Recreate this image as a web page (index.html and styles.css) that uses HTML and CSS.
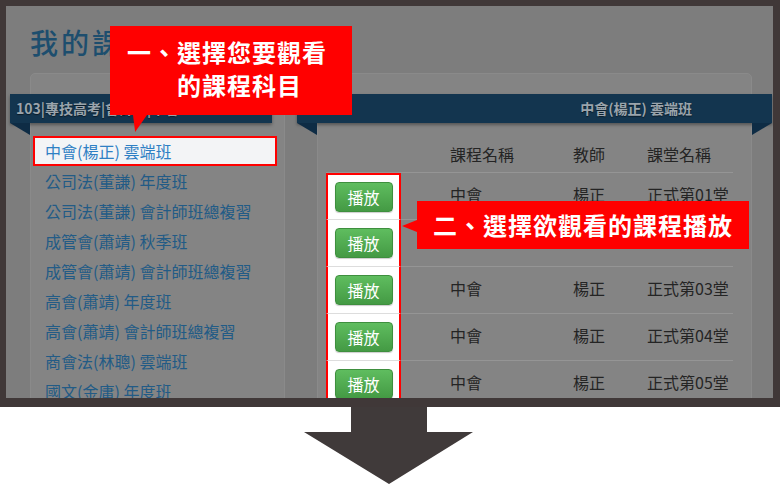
FILE: index.html
```html
<!DOCTYPE html>
<html lang="zh-Hant">
<head>
    <meta charset="UTF-8">
    <meta name="viewport" content="width=device-width, initial-scale=1">
    <title>我的課程</title>
    <link rel="stylesheet" href="styles.css">
</head>
<body>
    <div class="shot">
        <div class="page-head">
            <h1>我的課程</h1>
        </div>
        <div class="panels">
            <section class="card card-left">
                <div class="ribbon ribbon-left">103|專技高考|會計師|中會</div>
                <ul class="course-list">
                    <li class="active">中會(楊正) 雲端班</li>
                    <li>公司法(董謙) 年度班</li>
                    <li>公司法(董謙) 會計師班總複習</li>
                    <li>成管會(蕭靖) 秋季班</li>
                    <li>成管會(蕭靖) 會計師班總複習</li>
                    <li>高會(蕭靖) 年度班</li>
                    <li>高會(蕭靖) 會計師班總複習</li>
                    <li>商會法(林聰) 雲端班</li>
                    <li>國文(金庸) 年度班</li>
                </ul>
            </section>
            <section class="card card-right">
                <div class="ribbon ribbon-right">中會(楊正) 雲端班</div>
                <div class="lessons">
                    <div class="row head">
                        <span class="play"></span>
                        <span>課程名稱</span>
                        <span>教師</span>
                        <span>課堂名稱</span>
                    </div>
                    <div class="row">
                        <span class="play"><button class="btn">播放</button></span>
                        <span>中會</span>
                        <span>楊正</span>
                        <span>正式第01堂</span>
                    </div>
                    <!-- 這一列的文字被說明框蓋住 -->
                    <div class="row">
                        <span class="play"><button class="btn">播放</button></span>
                        <span></span>
                        <span></span>
                        <span></span>
                    </div>
                    <div class="row">
                        <span class="play"><button class="btn">播放</button></span>
                        <span>中會</span>
                        <span>楊正</span>
                        <span>正式第03堂</span>
                    </div>
                    <div class="row">
                        <span class="play"><button class="btn">播放</button></span>
                        <span>中會</span>
                        <span>楊正</span>
                        <span>正式第04堂</span>
                    </div>
                    <div class="row">
                        <span class="play"><button class="btn">播放</button></span>
                        <span>中會</span>
                        <span>楊正</span>
                        <span>正式第05堂</span>
                    </div>
                </div>
            </section>
        </div>
        <!-- 標註 -->
        <div class="callout callout-one">一、選擇您要觀看<br>　　的課程科目</div>
        <div class="callout callout-two">二、選擇欲觀看的課程播放</div>
    </div>
    <svg class="down-arrow" width="780" height="79" viewBox="0 0 780 79">
        <polygon points="351,0 427,0 427,25 473,25 389,77 304,25 351,25" fill="#403a3a"/>
    </svg>
</body>
</html>
```

FILE: styles.css
```css
body {
    margin: 0;
    width: 780px;
    height: 486px;
    overflow: hidden;
    background: #fff;
    font-family: "Noto Sans CJK TC", "Noto Sans", sans-serif;
}
.shot {
    position: relative;
    box-sizing: border-box;
    height: 407px;
    border: 6px solid #403838;
    border-right-width: 7px;
    border-bottom-width: 9px;
    background: #7d7d7d;
    overflow: hidden;
}
.page-head {
    height: 67px;
    box-sizing: border-box;
    padding: 19px 0 0 24px;
}
.page-head h1 {
    margin: 0;
    font-size: 28px;
    line-height: 34px;
    font-weight: 500;
    color: #1d4e6e;
    letter-spacing: 3px;
}
.panels {
    display: flex;
    gap: 32px;
    padding-left: 24px;
}
.card {
    box-sizing: border-box;
    height: 360px;
    padding-top: 20px;
    background: #848484;
    border: 1px solid #8a8a8a;
    border-radius: 5px;
}
.card-left { width: 255px; }
.card-right { width: 435px; }

/* 藍色緞帶標題 */
.ribbon {
    position: relative;
    box-sizing: border-box;
    height: 29px;
    line-height: 29px;
    margin-bottom: 13px;
    background: #13354f;
    color: #9aa4ac;
    font-size: 14px;
    font-weight: bold;
    text-shadow: 0 1px 1px rgba(0,0,0,0.5);
    box-shadow: 0 2px 3px rgba(0,0,0,0.35);
}
.ribbon::before,
.ribbon-right::after {
    content: "";
    position: absolute;
    top: 100%;
    width: 20px;
    height: 12px;
    background: #0e2c45;
}
.ribbon::before {
    left: 0;
    clip-path: polygon(0 0, 100% 0, 100% 100%);
}
.ribbon-right::after {
    right: 0;
    clip-path: polygon(0 0, 100% 0, 0 100%);
}
.ribbon-left {
    width: 262px;
    margin-left: -21px;
    padding-left: 6px;
}
.ribbon-right {
    margin: 0 -21px 13px;
    padding-right: 80px;
    text-align: right;
}

.course-list {
    list-style: none;
    margin: 0 7px 0 2px;
    padding: 0;
}
.course-list li {
    box-sizing: border-box;
    height: 30px;
    line-height: 30px;
    padding-left: 12px;
    font-size: 16px;
    color: #225b86;
}
.course-list li.active {
    background: #f3f4f6;
    border: 2px solid #f00;
    padding-left: 10px;
    line-height: 26px;
    color: #2f80c4;
}

.lessons {
    margin: 0 18px 0 8px;
}
.row {
    display: grid;
    grid-template-columns: 75px 172px 74px 1fr;
    font-size: 16px;
    color: #242424;
}
.row > * {
    display: flex;
    align-items: center;
    box-sizing: border-box;
    height: 47px;
    padding-bottom: 5px;
    border-bottom: 1px solid #959595;
}
.row > :nth-child(2) { padding-left: 49px; }
.row.head > * {
    height: 37px;
    padding-bottom: 0;
}
.row .play {
    justify-content: center;
    padding: 0;
    background: #fff;
    border-left: 2px solid #f00;
    border-right: 2px solid #f00;
    border-bottom-color: #ddd;
}
.row.head .play {
    background: none;
    border-left: 0;
    border-right: 0;
    border-bottom-color: #959595;
}
.row.head + .row .play { border-top: 2px solid #f00; }
.btn {
    width: 58px;
    height: 30px;
    padding: 0;
    border: 1px solid #3e8f3e;
    border-radius: 4px;
    background: linear-gradient(#5fbd5f, #449a44);
    color: #fff;
    font: 16px "Noto Sans CJK TC", sans-serif;
    box-shadow: 0 1px 1px rgba(0,0,0,0.2);
}

/* 紅色說明框 */
.callout {
    position: absolute;
    box-sizing: border-box;
    background: #f00;
    color: #fff;
    font-size: 24px;
    font-weight: bold;
    letter-spacing: 1px;
}
.callout-one {
    left: 104px;
    top: 20px;
    width: 242px;
    height: 89px;
    padding: 9px 0 0 17px;
    line-height: 33px;
}
.callout-one::after {
    content: "";
    position: absolute;
    left: 23px;
    top: 100%;
    width: 14px;
    height: 17px;
    background: #f00;
    clip-path: polygon(0 0, 100% 0, 15% 100%);
}
.callout-two {
    left: 411px;
    top: 195px;
    width: 332px;
    height: 48px;
    line-height: 48px;
    text-align: center;
}
.callout-two::before {
    content: "";
    position: absolute;
    left: -15px;
    top: 19px;
    width: 15px;
    height: 12px;
    background: #f00;
    clip-path: polygon(100% 0, 100% 100%, 0 50%);
}
.down-arrow { display: block; }
```
